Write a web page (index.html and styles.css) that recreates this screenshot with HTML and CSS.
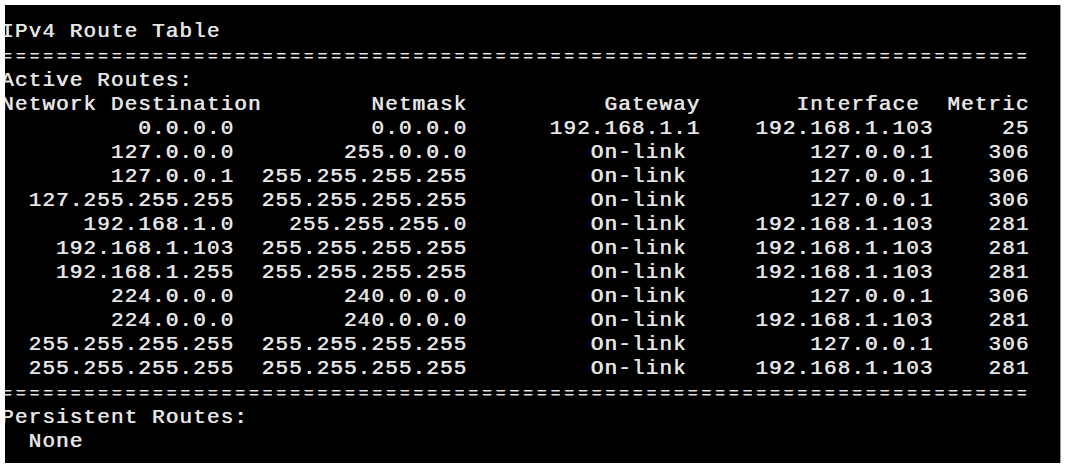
FILE: index.html
```html
<!DOCTYPE html>
<html lang="en">
<head>
<meta charset="utf-8">
<title>IPv4 Route Table</title>
<link rel="stylesheet" href="styles.css">
</head>
<body>
<div class="console">
<pre class="output">IPv4 Route Table
<span class="rule">===========================================================================</span>
Active Routes:
Network Destination        Netmask          Gateway       Interface  Metric
          0.0.0.0          0.0.0.0      192.168.1.1    192.168.1.103     25
        127.0.0.0        255.0.0.0         On-link         127.0.0.1    306
        127.0.0.1  255.255.255.255         On-link         127.0.0.1    306
  127.255.255.255  255.255.255.255         On-link         127.0.0.1    306
      192.168.1.0    255.255.255.0         On-link     192.168.1.103    281
    192.168.1.103  255.255.255.255         On-link     192.168.1.103    281
    192.168.1.255  255.255.255.255         On-link     192.168.1.103    281
        224.0.0.0        240.0.0.0         On-link         127.0.0.1    306
        224.0.0.0        240.0.0.0         On-link     192.168.1.103    281
  255.255.255.255  255.255.255.255         On-link         127.0.0.1    306
  255.255.255.255  255.255.255.255         On-link     192.168.1.103    281
<span class="rule">===========================================================================</span>
Persistent Routes:
  None</pre>
</div>
</body>
</html>
```
FILE: styles.css
```css
html, body {
  margin: 0;
  padding: 0;
  background: #ffffff;
}

body {
  padding: 5px 0 0 5px;
  width: 1070px;
  height: 470px;
  box-sizing: border-box;
  overflow: hidden;
}

.console {
  width: 1056px;
  height: 458px;
  background: #000000;
  border-right: 1px solid #9a9a9a;
  overflow: hidden;
  padding-top: 15px;
  box-sizing: border-box;
}

.output {
  margin: 0 0 0 -4px;
  font-family: "Liberation Mono", "DejaVu Sans Mono", monospace;
  font-size: 21px;
  font-weight: 400;
  line-height: 24px;
  letter-spacing: 1.11px;
  color: #e4e4e4;
  text-shadow: 0.6px 0 0 #e4e4e4;
  white-space: pre;
}

.rule {
  font-size: 16px;
  letter-spacing: 4.11px;
  padding-left: 1px;
}
```
